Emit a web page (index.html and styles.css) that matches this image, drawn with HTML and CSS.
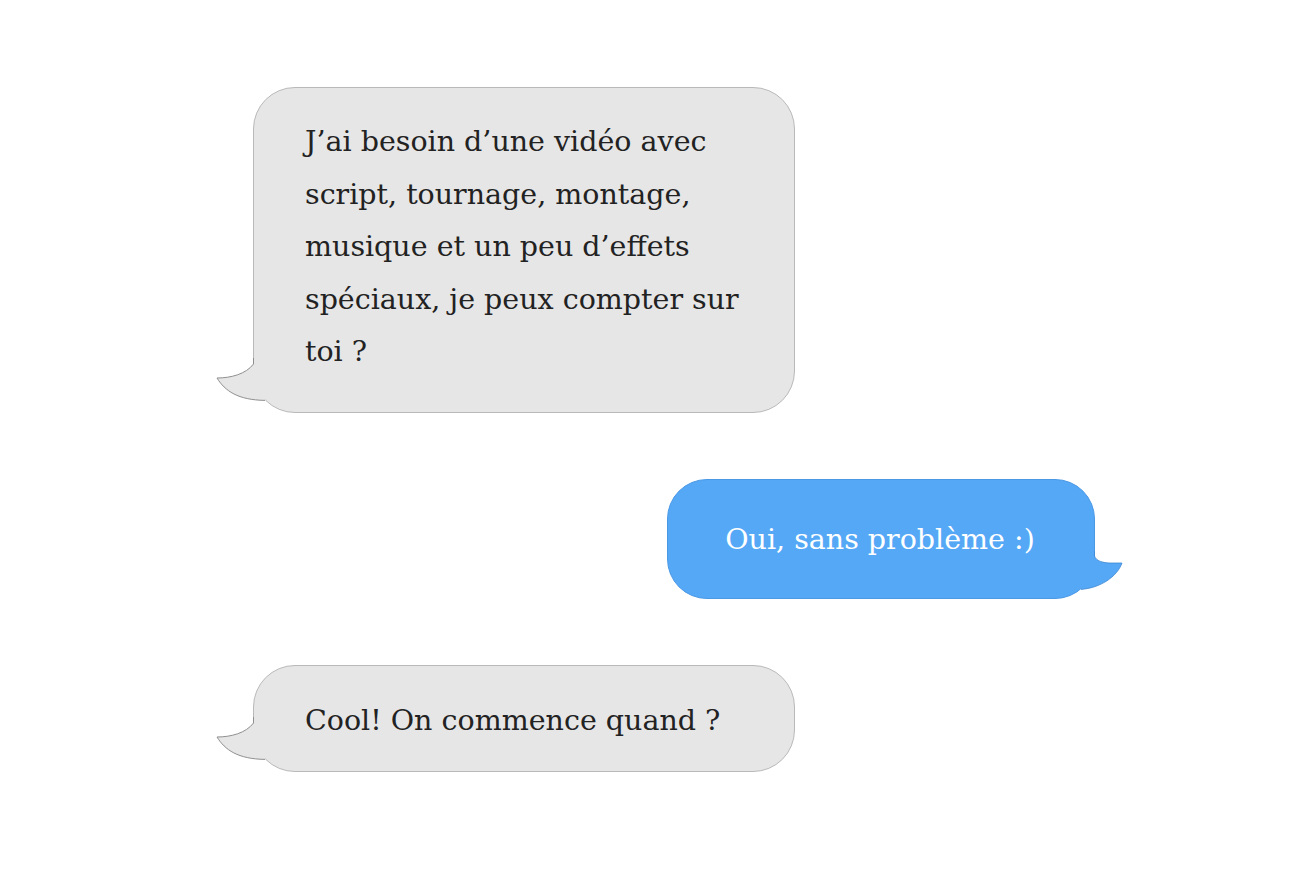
FILE: index.html
```
<!DOCTYPE html>
<html lang="fr">
<head>
<meta charset="utf-8">
<title>Conversation</title>
<link rel="stylesheet" href="styles.css">
</head>
<body>
<div class="chat">
  <div class="msg msg-in msg-long">
    <p class="msg-text">J’ai besoin d’une vidéo avec script, tournage, montage, musique et un peu d’effets spéciaux, je peux compter sur toi ?</p>
    <svg class="tail tail-in" viewBox="0 0 90 60" aria-hidden="true">
      <path class="tail-fill" d="M40.5 11 C33 21 18 25 4 25 C12 38 25 47 52 47.4 L53 40 L53 9 Z"/>
      <path class="tail-line" d="M40.5 5 L40.5 11 C33 21 18 25 4 25 C12 38 25 47 52 47.4"/>
    </svg>
  </div>
  <div class="msg msg-out">
    <p class="msg-text">Oui, sans problème :)</p>
    <svg class="tail tail-out" viewBox="0 0 70 60" aria-hidden="true">
      <path class="tail-fill" d="M29.5 17 C31 22 38 24 46 24 L57 24 C52 38 35 49 16 50.4 L15 40 L15 12 L29.5 12 Z"/>
      <path class="tail-line" d="M29.5 12 L29.5 17 C31 22 38 24 46 24 L57 24 C52 38 35 49 16 50.4"/>
    </svg>
  </div>
  <div class="msg msg-in msg-short">
    <p class="msg-text">Cool! On commence quand ?</p>
    <svg class="tail tail-in" viewBox="0 0 90 60" aria-hidden="true">
      <path class="tail-fill" d="M40.5 11 C33 21 18 25 4 25 C12 38 25 47 52 47.4 L53 40 L53 9 Z"/>
      <path class="tail-line" d="M40.5 5 L40.5 11 C33 21 18 25 4 25 C12 38 25 47 52 47.4"/>
    </svg>
  </div>
</div>
</body>
</html>
```
FILE: styles.css
```
html, body {
  margin: 0;
  background: #ffffff;
}

.chat {
  display: flex;
  flex-direction: column;
  align-items: flex-start;
  gap: 66px;
  width: 842px;
  margin-left: 253px;
  padding-top: 87px;
}

.msg {
  position: relative;
  box-sizing: border-box;
  border-radius: 42px;
  font-family: "DejaVu Serif", "Liberation Serif", serif;
  font-size: 28.5px;
  line-height: 52.5px;
}

.msg-text {
  margin: 0;
}

.msg-in {
  width: 542px;
  background: #e6e6e6;
  border: 1px solid #b9b9b9;
  color: #222222;
  padding-left: 51px;
  padding-right: 40px;
}

.msg-long {
  padding-top: 28px;
  padding-bottom: 33px;
}

.msg-short {
  padding-top: 29.5px;
  padding-bottom: 23.5px;
}

.msg-out {
  align-self: flex-end;
  width: 428px;
  background: #55a8f6;
  border: 1px solid #4a98e6;
  border-radius: 40px;
  color: #ffffff;
  text-align: center;
  padding: 34.5px 10px 31px 8px;
}

.tail {
  position: absolute;
  bottom: -1px;
  height: 60px;
  overflow: visible;
}

.tail-in {
  left: -41px;
  width: 90px;
}

.tail-out {
  right: -41px;
  width: 70px;
}

.tail-in .tail-fill {
  fill: #e6e6e6;
}

.tail-in .tail-line {
  fill: none;
  stroke: #8f8f8f;
  stroke-width: 1;
}

.tail-out .tail-fill {
  fill: #55a8f6;
}

.tail-out .tail-line {
  fill: none;
  stroke: #3f88d2;
  stroke-width: 0.8;
}
```
